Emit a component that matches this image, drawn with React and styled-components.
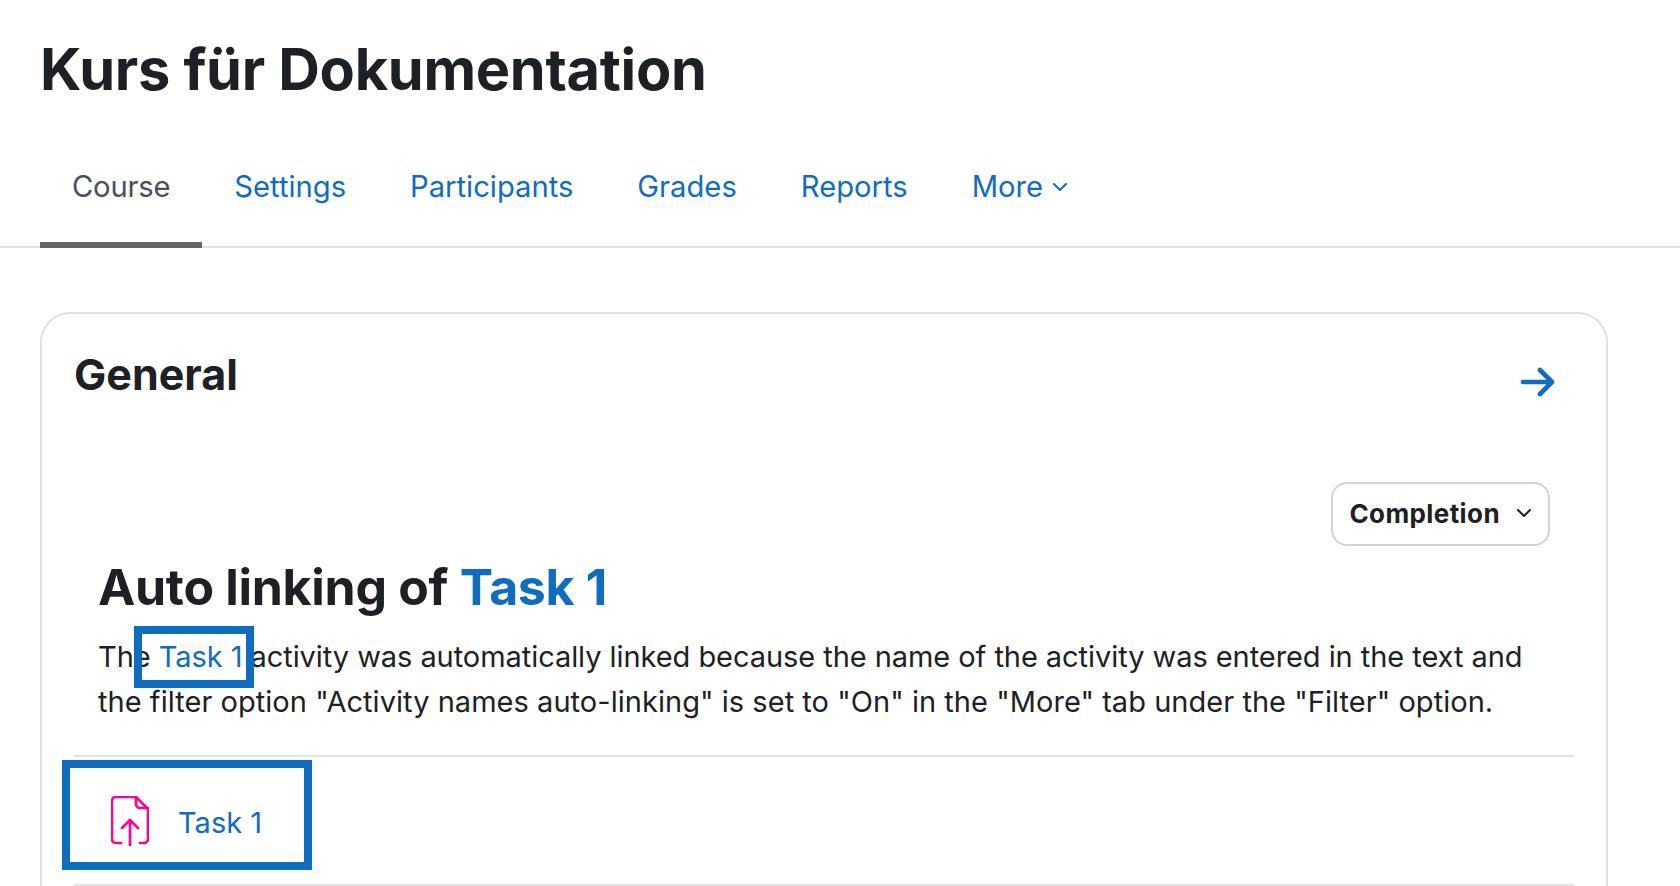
import React from 'react';
import styled, { createGlobalStyle } from 'styled-components';

const blue = '#0f6cbf';
const ink = '#1d2125';

const GlobalStyle = createGlobalStyle`
    html, body {
        margin: 0;
        height: 100%;
        overflow: hidden;
        background: #fff;
    }
    body {
        font-family: Inter, "Liberation Sans", sans-serif;
        color: ${ink};
    }
`;

const Page = styled.div`
    height: 886px;
    overflow: hidden;
`;

const Title = styled.h1`
    margin: 0;
    height: 100px;
    padding: 33px 0 0 40px;
    font-size: 57.7px;
    line-height: 72px;
    font-weight: 700;
    letter-spacing: -0.3px;
`;

const Tabs = styled.nav`
    display: flex;
    height: 113px;
    padding-left: 40px;
    border-bottom: 2px solid #dee2e6;
`;

const Tab = styled.a`
    display: flex;
    align-items: center;
    gap: 9px;
    box-sizing: border-box;
    height: ${(p) => (p.$active ? '115px' : '113px')};
    padding: 0 32px ${(p) => (p.$active ? '2px' : '6px')};
    font-size: 29.2px;
    letter-spacing: ${(p) => (p.$active ? '-0.2px' : '0')};
    color: ${(p) => (p.$active ? '#495057' : blue)};
    border-bottom: ${(p) => (p.$active ? '6px solid #666' : '0')};
`;

const Section = styled.section`
    margin: 64px 0 0 40px;
    width: 1568px;
    height: 700px;
    box-sizing: border-box;
    padding: 32px 32px 0;
    border: 2px solid #dee2e6;
    border-radius: 30px;
`;

const SectionHead = styled.div`
    display: flex;
    justify-content: space-between;
    align-items: flex-start;
    padding-right: 18px;
`;

const SectionTitle = styled.h2`
    margin: 0;
    font-size: 43px;
    line-height: 56px;
    font-weight: 700;
`;

const ArrowIcon = styled.svg`
    width: 36px;
    height: 32px;
    margin-top: 20px;
`;

const ToolRow = styled.div`
    display: flex;
    justify-content: flex-end;
    padding-right: 24px;
    margin-top: 80px;
`;

const Dropdown = styled.button`
    display: flex;
    align-items: center;
    gap: 16px;
    height: 64px;
    padding: 0 16px 2px 16px;
    background: #fff;
    border: 2px solid #ced4da;
    border-radius: 16px;
    font: 700 26px Inter, "Liberation Sans", sans-serif;
    letter-spacing: 0.4px;
    color: ${ink};
`;

const Summary = styled.div`
    padding: 0 24px;
    margin-top: 7px;
`;

const Heading = styled.h3`
    margin: 0;
    font-size: 50px;
    line-height: 68px;
    font-weight: 700;
    letter-spacing: -0.3px;
`;

const Paragraph = styled.p`
    margin: 13px 0 0;
    font-size: 29px;
    line-height: 45px;
    white-space: nowrap;
`;

const Line = styled.span`
    display: block;
    letter-spacing: ${(p) => p.$tracking}px;
`;

const Link = styled.a`
    color: ${blue};
`;

const Mark = styled.span`
    position: relative;
    &::after {
        content: '';
        position: absolute;
        left: -25px;
        right: -12px;
        top: -13px;
        bottom: -14px;
        border: 8px solid ${blue};
    }
`;

const ActivityRow = styled.div`
    position: relative;
    display: flex;
    align-items: center;
    gap: 29px;
    width: 1500px;
    height: 131px;
    box-sizing: border-box;
    margin-top: 31px;
    padding: 4px 0 0 37px;
    border-top: 2px solid #dee2e6;
    border-bottom: 2px solid #dee2e6;
`;

const ActivityFrame = styled.div`
    position: absolute;
    left: -12px;
    top: 3px;
    width: 250px;
    height: 110px;
    box-sizing: border-box;
    border: 8px solid ${blue};
`;

const FileIcon = styled.svg`
    width: 38px;
    height: 50px;
    margin-top: -4px;
`;

const ActivityLink = styled(Link)`
    font-size: 29px;
`;

const Chevron = ({ color }) => (
    <svg width="16" height="10" viewBox="0 0 16 10" fill="none" stroke={color} strokeWidth="2" strokeLinecap="round" strokeLinejoin="round">
        <path d="M2 2l6 6 6-6" />
    </svg>
);

const App = () => (
    <Page>
        <GlobalStyle />
        <Title>Kurs für Dokumentation</Title>
        <Tabs>
            <Tab $active>Course</Tab>
            <Tab>Settings</Tab>
            <Tab>Participants</Tab>
            <Tab>Grades</Tab>
            <Tab>Reports</Tab>
            <Tab>More <Chevron color={blue} /></Tab>
        </Tabs>
        <Section>
            <SectionHead>
                <SectionTitle>General</SectionTitle>
                <ArrowIcon viewBox="0 0 36 32" fill="none" stroke={blue} strokeWidth="4.6" strokeLinecap="round" strokeLinejoin="round">
                    <path d="M3 16h29M20 4l12 12-12 12" />
                </ArrowIcon>
            </SectionHead>
            <ToolRow>
                <Dropdown>Completion <Chevron color={ink} /></Dropdown>
            </ToolRow>
            <Summary>
                <Heading>Auto linking of <Link>Task 1</Link></Heading>
                <Paragraph>
                    <Line $tracking={-0.06}>The <Mark><Link>Task 1</Link></Mark> activity was automatically linked because the name of the activity was entered in the text and</Line>
                    <Line $tracking={0.04}>the filter option "Activity names auto-linking" is set to "On" in the "More" tab under the "Filter" option.</Line>
                </Paragraph>
            </Summary>
            <ActivityRow>
                <ActivityFrame />
                <FileIcon viewBox="0 0 38 50" fill="none" stroke="#f7068f" strokeWidth="2.7" strokeLinecap="round" strokeLinejoin="round">
                    <path d="M10 47H5a4 4 0 0 1-4-4V5a4 4 0 0 1 4-4h20l12 12v30a4 4 0 0 1-4 4h-4" />
                    <path d="M25 1v7a4 4 0 0 0 4 4h8" />
                    <path d="M19 49V24M11 32l8-8 8 8" />
                </FileIcon>
                <ActivityLink>Task 1</ActivityLink>
            </ActivityRow>
        </Section>
    </Page>
);

export default App;
